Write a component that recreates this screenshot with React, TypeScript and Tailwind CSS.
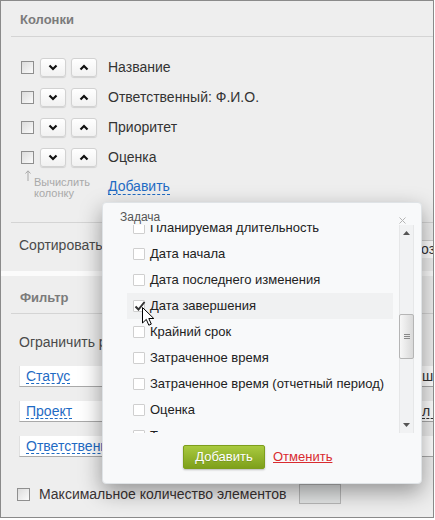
import React from "react";

function Chevron({ up }: { up?: boolean }) {
  return (
    <svg width="10" height="7" viewBox="0 0 10 7">
      <polyline
        points={up ? "1.5,5.5 5,2 8.5,5.5" : "1.5,1.5 5,5 8.5,1.5"}
        fill="none"
        stroke="#111"
        strokeWidth="2.2"
      />
    </svg>
  );
}

function MoveBtn({ up }: { up?: boolean }) {
  return (
    <div className="w-[26px] h-[19px] rounded-[3px] border border-[#d2d2d2] bg-gradient-to-b from-[#ffffff] to-[#f1f1f1] shadow-[0_1px_1px_rgba(0,0,0,0.12)] flex items-center justify-center">
      <Chevron up={up} />
    </div>
  );
}

function MainCheckbox() {
  return (
    <div className="w-[13px] h-[13px] border border-[#8f8f8f] bg-gradient-to-br from-[#dcdcdc] to-[#fbfbfb] shrink-0" />
  );
}

function ColRow({ label }: { label: string }) {
  return (
    <div className="flex items-center h-[19px]">
      <MainCheckbox />
      <div className="ml-[6px] flex gap-[5px]">
        <MoveBtn />
        <MoveBtn up />
      </div>
      <span className="ml-[11px] text-[14px] leading-[17px] text-[#333]">{label}</span>
    </div>
  );
}

function DlgCheckbox({ checked }: { checked?: boolean }) {
  return (
    <div className="w-[12px] h-[12px] border border-[#cfcfcf] bg-white rounded-[1px] shrink-0 relative">
      {checked && (
        <svg className="absolute left-[0px] top-[-1px]" width="12" height="12" viewBox="0 0 12 12">
          <path d="M1.5 6.5 L4.5 9.5 L10.5 2" fill="none" stroke="#333" strokeWidth="2" />
        </svg>
      )}
    </div>
  );
}

const items = [
  "Планируемая длительность",
  "Дата начала",
  "Дата последнего изменения",
  "Дата завершения",
  "Крайний срок",
  "Затраченное время",
  "Затраченное время (отчетный период)",
  "Оценка",
  "Теги",
];

export default function App() {
  return (
    <div className="w-[435px] h-[520px] bg-white font-['Liberation_Sans',Arial,sans-serif]">
      <div className="relative w-[434px] h-[518px] border border-[#8a8a8a] bg-[#eeeeee] overflow-hidden">
        {/* Panel 1 */}
        <div className="h-[270px] flex flex-col">
          <div className="pl-[19px] pt-[11px] pb-[8px] text-[13px] leading-[16px] font-bold text-[#7b7b7b]">
            Колонки
          </div>
          <div className="ml-[10px] h-px bg-[#d4d4d4]" />
          <div className="pl-[20px] pt-[21px] flex flex-col gap-[11px]">
            <ColRow label="Название" />
            <ColRow label="Ответственный: Ф.И.О." />
            <ColRow label="Приоритет" />
            <ColRow label="Оценка" />
          </div>
          <div className="flex items-start pl-[24px] mt-[3px]">
            <svg width="6" height="11" viewBox="0 0 6 11" className="shrink-0">
              <line x1="3" y1="1" x2="3" y2="11" stroke="#a8a8a8" strokeWidth="1" />
              <polyline points="0.5,3.5 3,0.8 5.5,3.5" fill="none" stroke="#a8a8a8" strokeWidth="1" />
            </svg>
            <div className="ml-[3px] mt-[7px] w-[74px] text-[11px] leading-[11px] text-[#a9a9a9]">
              Вычислить<br />колонку
            </div>
            <span className="mt-[9px] text-[14px] leading-[15px] text-[#1f6bc4] border-b border-dashed border-[#1f6bc4]">
              Добавить
            </span>
          </div>
          <div className="ml-[10px] mt-[23px] h-px bg-[#d4d4d4]" />
          <div className="flex items-start">
            <span className="pl-[18px] pt-[14px] text-[14px] leading-[17px] text-[#4a4a4a]">
              Сортировать по
            </span>
            <div className="ml-auto mt-[17px] w-[133px] h-[18px] bg-white border-t border-[#d0d0d0] pl-[121px] text-[14px] leading-[17px] text-[#333] whitespace-nowrap overflow-hidden">
              озиции
            </div>
          </div>
        </div>
        <div className="h-[5px] bg-[#fbfbfb]" />
        {/* Panel 2 */}
        <div className="flex flex-col">
          <div className="pl-[19px] pt-[14px] pb-[7px] text-[13px] leading-[16px] font-bold text-[#7b7b7b]">
            Фильтр
          </div>
          <div className="ml-[10px] h-px bg-[#d4d4d4]" />
          <div className="pl-[18px] mt-[20px] text-[14px] leading-[17px] text-[#4a4a4a]">
            Ограничить результат
          </div>
          <div className="mt-[15px] flex flex-col gap-[14px]">
            {[
              { l: "Статус", r: "шена", d: false },
              { l: "Проект", r: "л ,", d: true },
              { l: "Ответственный", r: "", d: false },
            ].map((f) => (
              <div
                key={f.l}
                className="ml-[18px] h-[21px] bg-white border-l border-l-[#e0e0e0] border-b border-b-[#a9a9a9] flex items-center pl-[6px] whitespace-nowrap overflow-hidden"
              >
                <div className="w-[396px] shrink-0">
                  <span className="inline-block text-[14px] leading-[14px] text-[#1f6bc4] border-b border-dashed border-[#1f6bc4]">
                    {f.l}
                  </span>
                </div>
                {f.r && (
                  <span
                    className={
                      f.d
                        ? "inline-block text-[14px] leading-[14px] text-[#333] border-b border-dashed border-[#333]"
                        : "text-[14px] leading-[14px] text-[#333]"
                    }
                  >
                    {f.r}
                  </span>
                )}
              </div>
            ))}
          </div>
          <div className="mt-[27px] h-[20px] flex items-center pl-[16px]">
            <MainCheckbox />
            <span className="ml-[9px] w-[260px] shrink-0 text-[14px] leading-[17px] text-[#3a3333] whitespace-nowrap">
              Максимальное количество элементов
            </span>
            <div className="w-[42px] h-[20px] bg-[#e4e6e6] border border-[#b8b8b8]" />
          </div>
        </div>

        {/* Dialog */}
        <div className="absolute left-[101px] top-[201px] w-[320px] h-[282px] bg-[#f8f9fa] rounded-[4px] border border-[#dfe3e6] shadow-[0_8px_22px_rgba(0,0,0,0.38)] flex flex-col">
          <div className="flex justify-between pl-[17px] pr-[15px] pt-[7px]">
            <span className="text-[12px] leading-[14px] text-[#555]">Задача</span>
            <svg className="mt-[7px]" width="7" height="7" viewBox="0 0 7 7">
              <path d="M0.5 0.5 L6.5 6.5 M6.5 0.5 L0.5 6.5" stroke="#b4b4b4" strokeWidth="1" />
            </svg>
          </div>
          <div className="mt-[1px] ml-[24px] flex">
            <div className="w-[266px] h-[208px] overflow-hidden">
              <div className="-mt-[10px] flex flex-col">
                {items.map((it, i) => (
                  <div
                    key={it}
                    className={
                      "h-[26px] flex items-center pl-[6px] " + (i === 3 ? "bg-[#f0f1f2]" : "")
                    }
                  >
                    <DlgCheckbox checked={i === 3} />
                    <span className="ml-[5px] text-[13px] leading-[16px] text-[#222] whitespace-nowrap">{it}</span>
                  </div>
                ))}
              </div>
            </div>
            {/* scrollbar */}
            <div className="ml-[6px] w-[15px] h-[208px] bg-[#f1f2f3] border-x border-[#e6e7e8] flex flex-col items-center">
              <svg className="mt-[6px]" width="7" height="4" viewBox="0 0 7 4">
                <polygon points="0,4 3.5,0 7,4" fill="#555" />
              </svg>
              <div className="mt-[79px] w-[15px] h-[45px] rounded-[2px] border border-[#b5b5b5] bg-gradient-to-r from-[#f7f7f7] to-[#d9d9d9] flex flex-col items-center justify-center gap-[1px]">
                <div className="w-[6px] h-px bg-[#888]" />
                <div className="w-[6px] h-px bg-[#888]" />
                <div className="w-[6px] h-px bg-[#888]" />
              </div>
              <svg className="mt-auto mb-[6px]" width="7" height="4" viewBox="0 0 7 4">
                <polygon points="0,0 3.5,4 7,0" fill="#555" />
              </svg>
            </div>
          </div>
          <div className="mt-[12px] pl-[80px] flex items-center">
            <div className="w-[82px] h-[24px] rounded-[2px] border border-[#7d9e1c] bg-gradient-to-b from-[#a9ca3e] to-[#7ea01a] shadow-[0_1px_2px_rgba(0,0,0,0.25)] flex items-center justify-center text-white text-[13px] [text-shadow:0_1px_0_rgba(0,0,0,0.15)]">
              Добавить
            </div>
            <span className="ml-[8px] text-[13px] text-[#d92b2f] underline">Отменить</span>
          </div>
        </div>

        {/* cursor */}
        <svg className="absolute left-[141px] top-[306px]" width="13" height="20" viewBox="0 0 13 20">
          <path
            d="M0.5 0.5 L0.5 16 L4.3 12.4 L6.8 18.2 L9.3 17.1 L6.8 11.5 L11.8 11.5 Z"
            fill="#fff"
            stroke="#000"
            strokeWidth="1"
            strokeLinejoin="round"
          />
        </svg>
      </div>
    </div>
  );
}
